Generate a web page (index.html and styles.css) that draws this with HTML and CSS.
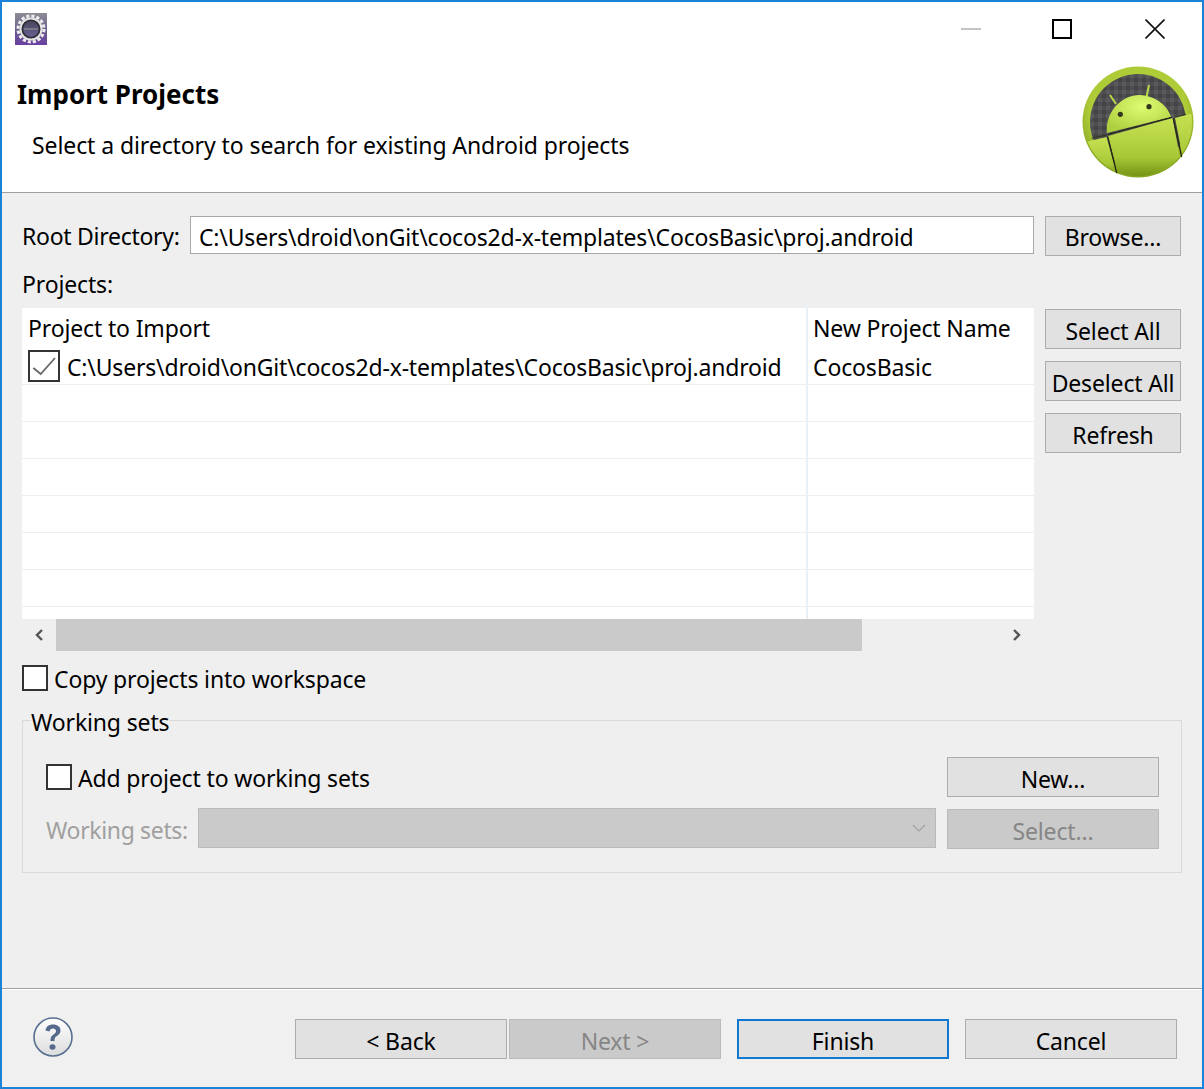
FILE: index.html
```html
<!DOCTYPE html>
<html lang="en">
<head>
  <meta charset="UTF-8" />
  <title>Import Projects</title>
  <link rel="stylesheet" href="styles.css">
</head>
<body>
  <div class="window">
    <div class="top">
      <div class="titlebar">
        <svg class="app-icon" width="32" height="32" viewBox="0 0 32 32">
          <defs>
            <linearGradient id="appBg" x1="0" y1="0" x2="0" y2="1">
              <stop offset="0" stop-color="#8d8d94" />
              <stop offset="0.6" stop-color="#6a5a8c" />
              <stop offset="1" stop-color="#6b3fa6" />
            </linearGradient>
            <linearGradient id="appCore" x1="0" y1="0" x2="0" y2="1">
              <stop offset="0" stop-color="#45455a" />
              <stop offset="1" stop-color="#6c6094" />
            </linearGradient>
          </defs>
          <rect width="32" height="32" fill="url(#appBg)" />
          <circle cx="16" cy="16" r="13" fill="none" stroke="#eeeeee" stroke-width="3" stroke-dasharray="3.2 1.9" />
          <circle cx="16" cy="16" r="11.5" fill="#e4e4e4" />
          <circle cx="16" cy="16" r="8.7" fill="url(#appCore)" stroke="#2a2a32" stroke-width="1.6" />
          <rect x="9" y="15" width="14" height="2" fill="#77778a" />
        </svg>
        <div class="win-controls">
          <svg class="win-btn win-min" width="20" height="20" viewBox="0 0 20 20"><rect y="9" width="20" height="2" fill="#c4c4c4" /></svg>
          <svg class="win-btn" width="20" height="20" viewBox="0 0 20 20"><rect x="1" y="1" width="18" height="18" fill="none" stroke="#000" stroke-width="2" /></svg>
          <svg class="win-btn" width="20" height="20" viewBox="0 0 20 20"><path d="M0.5 0.5L19.5 19.5M19.5 0.5L0.5 19.5" stroke="#111" stroke-width="1.6" /></svg>
        </div>
      </div>
      <div class="banner">
        <div class="banner-text">
          <h1>Import Projects</h1>
          <p>Select a directory to search for existing Android projects</p>
        </div>
        <svg class="android-logo" width="112" height="112" viewBox="0 0 112 112">
          <defs>
            <radialGradient id="rim" cx="0.5" cy="0.4" r="0.62">
              <stop offset="0.7" stop-color="#aecb38" />
              <stop offset="1" stop-color="#7f9f1c" />
            </radialGradient>
            <radialGradient id="head" cx="0.55" cy="0.3" r="0.7">
              <stop offset="0" stop-color="#dffc74" />
              <stop offset="1" stop-color="#aed03e" />
            </radialGradient>
            <linearGradient id="body" x1="0" y1="0" x2="0" y2="1">
              <stop offset="0" stop-color="#c6e254" />
              <stop offset="0.65" stop-color="#a8c836" />
              <stop offset="1" stop-color="#6f8f14" />
            </linearGradient>
            <pattern id="plaid" width="8" height="8" patternUnits="userSpaceOnUse">
              <rect width="8" height="8" fill="#4e4e50" />
              <rect width="4" height="4" fill="#5a5a5c" />
              <rect x="4" y="4" width="4" height="4" fill="#444446" />
            </pattern>
            <clipPath id="inner"><circle cx="56" cy="56" r="48" /></clipPath>
            <clipPath id="outer"><circle cx="56" cy="56" r="54" /></clipPath>
          </defs>
          <circle cx="56" cy="56" r="55.5" fill="url(#rim)" />
          <circle cx="56" cy="56" r="48" fill="url(#plaid)" />
          <g clip-path="url(#inner)">
            <path d="M28 29L34 38M67 19L64.5 31" stroke="#b7d94a" stroke-width="2" />
            <path d="M25 67C23 42 44 28 58 29C74 30 86 40 89 51Z" fill="url(#head)" />
          </g>
          <g clip-path="url(#outer)">
            <path d="M26 70L90.5 52L102 112H37Z" fill="url(#body)" />
            <path d="M0 77L24.5 71L36 112H0Z" fill="url(#body)" />
            <path d="M93 52L112 47V112L101 92Z" fill="url(#body)" />
          </g>
          <path d="M25.7 68.5L90 51.3" stroke="#23270f" stroke-width="1.1" />
          <path d="M25.7 70.7L34.7 107M91.3 52.3L99.7 91" stroke="#23270f" stroke-width="1.3" />
          <path d="M9.7 72.3L25 68.8M93 50.7L104 48.3" stroke="#33361e" stroke-width="1" />
          <circle cx="38.3" cy="48.3" r="2.6" fill="#33381e" />
          <circle cx="67" cy="40.7" r="2.6" fill="#33381e" />
        </svg>
      </div>
    </div>

    <div class="content">
      <div class="root-row">
        <label class="root-label">Root Directory:</label>
        <input class="text-input" type="text" value="C:\Users\droid\onGit\cocos2d-x-templates\CocosBasic\proj.android" />
        <button class="btn side-btn browse-btn">Browse...</button>
      </div>

      <div class="projects-label">Projects:</div>

      <div class="projects-row">
        <div class="table-wrap">
          <div class="table">
            <div class="table-col col-project">
              <div class="col-head">Project to Import</div>
              <div class="cell">
                <span class="check check-small">
                  <svg width="26" height="26" viewBox="0 0 26 26"><path d="M2.3 15L9.7 21L24 5" fill="none" stroke="#666" stroke-width="1.8" /></svg>
                </span>
                <span class="cell-text path-text">C:\Users\droid\onGit\cocos2d-x-templates\CocosBasic\proj.android</span>
              </div>
              <div class="cell"></div>
              <div class="cell"></div>
              <div class="cell"></div>
              <div class="cell"></div>
              <div class="cell"></div>
              <div class="cell"></div>
            </div>
            <div class="table-col col-name">
              <div class="col-head">New Project Name</div>
              <div class="cell"><span class="cell-text">CocosBasic</span></div>
              <div class="cell"></div>
              <div class="cell"></div>
              <div class="cell"></div>
              <div class="cell"></div>
              <div class="cell"></div>
              <div class="cell"></div>
            </div>
          </div>
          <div class="hscroll">
            <span class="arrow">
              <svg width="12" height="14" viewBox="0 0 12 14"><path d="M9 2L4 7L9 12" fill="none" stroke="#555" stroke-width="2.4" /></svg>
            </span>
            <span class="thumb"></span>
            <span class="arrow arrow-right">
              <svg width="12" height="14" viewBox="0 0 12 14"><path d="M3 2L8 7L3 12" fill="none" stroke="#555" stroke-width="2.4" /></svg>
            </span>
          </div>
        </div>
        <div class="side-col">
          <button class="btn side-btn">Select All</button>
          <button class="btn side-btn">Deselect All</button>
          <button class="btn side-btn">Refresh</button>
        </div>
      </div>

      <label class="check-row copy-row"><span class="check"></span><span class="check-text">Copy projects into workspace</span></label>

      <fieldset class="group">
        <legend>Working sets</legend>
        <div class="group-row">
          <label class="check-row"><span class="check"></span><span class="check-text">Add project to working sets</span></label>
          <button class="btn group-btn">New...</button>
        </div>
        <div class="group-row group-row-second">
          <span class="disabled-label">Working sets:</span>
          <div class="combo">
            <svg width="14" height="8" viewBox="0 0 14 8"><path d="M1 1L7 7L13 1" fill="none" stroke="#a2a2a2" stroke-width="1.2" /></svg>
          </div>
          <button class="btn btn-disabled group-btn" disabled>Select...</button>
        </div>
      </fieldset>
    </div>

    <div class="footer">
      <svg class="help" width="40" height="40" viewBox="0 0 40 40">
        <defs>
          <linearGradient id="helpFill" x1="0" y1="0" x2="0" y2="1">
            <stop offset="0" stop-color="#ffffff" />
            <stop offset="1" stop-color="#dcdcdc" />
          </linearGradient>
        </defs>
        <circle cx="20" cy="20" r="19" fill="url(#helpFill)" stroke="#57708f" stroke-width="1.6" />
        <path d="M12.5 13.5C13 9.5 16 7.5 20 7.5C24.5 7.5 27.5 10 27.5 13.5C27.5 16.5 25.5 18 23.5 19.3C21.8 20.4 21.5 21.3 21.5 24H17.5C17.5 20.5 18.2 19 20.5 17.5C22.5 16.2 23 15.3 23 14C23 12.4 21.8 11.4 20 11.4C18 11.4 16.8 12.6 16.5 14.5Z" fill="#54698c" />
        <ellipse cx="19.5" cy="30" rx="3" ry="2.8" fill="#54698c" />
      </svg>
      <div class="footer-btns">
        <button class="btn footer-btn">&lt; Back</button>
        <button class="btn btn-disabled footer-btn" disabled>Next &gt;</button>
        <button class="btn footer-btn btn-default">Finish</button>
        <button class="btn footer-btn">Cancel</button>
      </div>
    </div>
  </div>
</body>
</html>
```

FILE: styles.css
```css
* {
  box-sizing: border-box;
}
body {
  margin: 0;
  font-family: "Noto Sans", "Open Sans", sans-serif;
  font-size: 23px;
  letter-spacing: -0.15px;
  color: #000;
  background-color: #efefef;
}
.window {
  width: 1204px;
  height: 1089px;
  border: 2px solid #1a83d8;
  display: flex;
  flex-direction: column;
  overflow: hidden;
}

/* white header */
.top {
  height: 191px;
  flex: none;
  background-color: white;
  border-bottom: 1px solid #a0a0a0;
}
.titlebar {
  height: 62px;
  display: flex;
  justify-content: space-between;
  padding: 11px 0 0 13px;
}
.win-controls {
  display: flex;
  gap: 73px;
  padding: 6px 37px 0 0;
  height: 28px;
}
.win-min {
  margin-right: -2px;
}
.banner {
  display: flex;
  justify-content: space-between;
  height: 128px;
}
.banner-text h1 {
  margin: 12px 0 0 15px;
  font-size: 26px;
  line-height: 36px;
  font-weight: 700;
  letter-spacing: 0;
}
.banner-text p {
  margin: 15px 0 0 30px;
  line-height: 36px;
  letter-spacing: -0.09px;
}
.android-logo {
  margin: 2px 8px 0 0;
}

/* main form */
.content {
  flex: 1;
  padding: 23px 21px 0 20px;
}
.root-row {
  display: flex;
  align-items: flex-start;
  height: 40px;
}
.root-label {
  width: 168px;
  padding: 1px 0 0 0;
  line-height: 38px;
  letter-spacing: -0.28px;
}
.text-input {
  width: 844px;
  height: 38px;
  padding: 4px 8px 0;
  margin-right: 11px;
  border: 1px solid #a8a8a8;
  background-color: white;
  font: inherit;
  letter-spacing: -0.19px;
  color: #000;
  outline: none;
}
.btn {
  background-color: #e1e1e1;
  border: 1px solid #adadad;
  font: inherit;
  letter-spacing: inherit;
  color: #000;
  padding: 3px 0 0;
}
.btn-disabled {
  background-color: #cacaca;
  border-color: #bababa;
  color: #868686;
}
.side-btn {
  width: 136px;
  height: 40px;
}
.browse-btn {
  padding-top: 1px;
}
.projects-label {
  margin-top: 12px;
  line-height: 32px;
  height: 40px;
}

/* table with the scrollbar under it */
.projects-row {
  display: flex;
  gap: 11px;
}
.table-wrap {
  width: 1012px;
}
.table {
  display: flex;
  height: 311px;
  overflow: hidden;
  background-color: white;
}
.col-project {
  width: 786px;
  border-right: 2px solid #e8f0f8;
}
.col-name {
  flex: 1;
}
.col-name .col-head,
.col-name .cell {
  padding-left: 5px;
}
.col-head {
  height: 40px;
  padding: 2px 0 0 6px;
  line-height: 36px;
  white-space: nowrap;
}
.cell {
  height: 37px;
  padding-left: 6px;
  border-bottom: 1px solid #efefef;
  line-height: 36px;
  display: flex;
  align-items: center;
  white-space: nowrap;
}
.cell-text {
  padding-top: 2px;
}
.path-text {
  letter-spacing: -0.19px;
}
.hscroll {
  display: flex;
  height: 32px;
  align-items: center;
}
.arrow {
  width: 34px;
  height: 14px;
  flex: none;
  padding-left: 11px;
  display: flex;
}
.thumb {
  width: 806px;
  height: 32px;
  flex: none;
  background-color: #cacaca;
}
.arrow-right {
  margin-left: 138px;
}
.side-col {
  display: flex;
  flex-direction: column;
  gap: 12px;
  padding-top: 1px;
}

/* checkboxes */
.check {
  width: 26px;
  height: 26px;
  flex: none;
  display: inline-block;
  border: 2px solid #333;
  background-color: white;
  margin-right: 6px;
}
.check-small {
  width: 32px;
  height: 32px;
  margin-right: 7px;
  padding: 1px;
}
.check-small svg {
  display: block;
}
.check-row {
  display: flex;
  align-items: center;
  line-height: 32px;
}
.check-text {
  padding-top: 2px;
}
.copy-row {
  margin-top: 10px;
}

/* working sets */
.group {
  margin: 8px 0 0;
  padding: 0 22px 0 23px;
  width: 1160px;
  height: 170px;
  border: 1px solid #d9d9d9;
}
.group legend {
  padding: 4px 0 0;
  margin-left: -15px;
  line-height: 30px;
}
.group-row {
  display: flex;
  align-items: center;
  justify-content: space-between;
  margin-top: 20px;
  height: 40px;
}
.group-row-second {
  justify-content: flex-start;
  margin-top: 12px;
}
.group-btn {
  width: 212px;
  height: 40px;
}
.disabled-label {
  width: 152px;
  padding-top: 2px;
  color: #a0a0a0;
  letter-spacing: -0.35px;
}
.combo {
  width: 738px;
  height: 40px;
  margin: 0 11px 2px 0;
  background-color: #cacaca;
  border: 1px solid #bababa;
  display: flex;
  align-items: center;
  justify-content: flex-end;
  padding-right: 9px;
}

/* bottom buttons */
.footer {
  height: 99px;
  flex: none;
  border-top: 1px solid #a0a0a0;
  box-shadow: inset 0 1px 0 white;
  display: flex;
  justify-content: space-between;
  padding: 28px 25px 0 31px;
  background-color: #f0f0f0;
}
.help {
  flex: none;
}
.footer-btns {
  display: flex;
  padding-top: 2px;
}
.footer-btn {
  width: 212px;
  height: 40px;
  margin-left: 16px;
}
.footer-btn:nth-child(2) {
  margin-left: 2px;
}
.btn-default {
  border: 2px solid #0f78d0;
}
```
